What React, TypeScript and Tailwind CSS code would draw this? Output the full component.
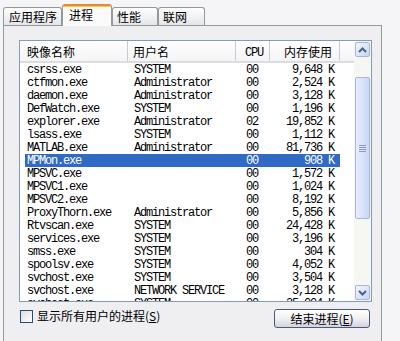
import React from "react";

const rows: [string, string, string, string][] = [
  ["csrss.exe", "SYSTEM", "00", "9,648 K"],
  ["ctfmon.exe", "Administrator", "00", "2,524 K"],
  ["daemon.exe", "Administrator", "00", "3,128 K"],
  ["DefWatch.exe", "SYSTEM", "00", "1,196 K"],
  ["explorer.exe", "Administrator", "02", "19,852 K"],
  ["lsass.exe", "SYSTEM", "00", "1,112 K"],
  ["MATLAB.exe", "Administrator", "00", "81,736 K"],
  ["MPMon.exe", "", "00", "908 K"],
  ["MPSVC.exe", "", "00", "1,572 K"],
  ["MPSVC1.exe", "", "00", "1,024 K"],
  ["MPSVC2.exe", "", "00", "8,192 K"],
  ["ProxyThorn.exe", "Administrator", "00", "5,856 K"],
  ["Rtvscan.exe", "SYSTEM", "00", "24,428 K"],
  ["services.exe", "SYSTEM", "00", "3,196 K"],
  ["smss.exe", "SYSTEM", "00", "304 K"],
  ["spoolsv.exe", "SYSTEM", "00", "4,052 K"],
  ["svchost.exe", "SYSTEM", "00", "3,504 K"],
  ["svchost.exe", "NETWORK SERVICE", "00", "3,128 K"],
  ["svchost.exe", "SYSTEM", "00", "25,004 K"],
];

const cjk = "font-['Noto_Sans_CJK_SC',sans-serif]";
const mono = "font-['Liberation_Mono','Noto_Sans_CJK_SC',monospace] tracking-[-1.2px]";

function Arrow({ up }: { up: boolean }) {
  return (
    <svg width="9" height="6" viewBox="0 0 9 6">
      <path
        d={up ? "M1 5 L4.5 1.5 L8 5" : "M1 1 L4.5 4.5 L8 1"}
        fill="none"
        stroke="#4d6185"
        strokeWidth="2"
      />
    </svg>
  );
}

function ScrollButton({ up }: { up: boolean }) {
  return (
    <div className="h-[17px] w-[17px] p-px">
      <div className="h-full w-full rounded-[2px] border border-[#a9b6d6] bg-linear-to-br from-[#f3f6fd] to-[#c8d5f5] flex items-center justify-center">
        <Arrow up={up} />
      </div>
    </div>
  );
}

export default function App() {
  return (
    <div className={`w-[400px] h-[341px] overflow-hidden bg-[#f5f4f6] text-black text-[12px] ${cjk}`}>
      {/* Tabs */}
      <div className="flex items-end h-[25px] pl-[3px]">
        <div className="w-[59px] h-[18px] border border-b-0 border-[#919b9c] rounded-t-[3px] bg-linear-to-b from-[#ffffff] to-[#e6e5ea] pl-[5px] leading-[17px]">
          应用程序
        </div>
        <div className="relative z-10 -mb-px w-[50px] h-[22px] border border-b-0 border-[#919b9c] border-t-0 rounded-t-[3px] bg-[#fbfbfc] overflow-hidden">
          <div className="h-[2px] bg-[#e68b2c]" />
          <div className="h-px bg-[#ffc73c]" />
          <div className="pl-[6px] leading-[16px]">进程</div>
        </div>
        <div className="w-[46px] h-[18px] border border-b-0 border-[#919b9c] rounded-t-[3px] bg-linear-to-b from-[#ffffff] to-[#e6e5ea] pl-[4px] leading-[17px]">
          性能
        </div>
        <div className="w-[47px] h-[18px] border border-b-0 border-[#919b9c] rounded-t-[3px] bg-linear-to-b from-[#ffffff] to-[#e6e5ea] pl-[4px] leading-[17px]">
          联网
        </div>
      </div>

      {/* Panel */}
      <div className="ml-[3px] w-[379px] h-[330px] border border-[#919b9c] bg-[#efeef1]">
        {/* List box */}
        <div className="ml-[15px] mt-[14px] w-[353px] h-[262px] border border-[#7f9db9] bg-white flex">
          <div className="w-[334px] flex flex-col">
            {/* Header */}
            <div className="h-[22px] flex bg-linear-to-b from-[#ffffff] to-[#f4f4f4] border-b-2 border-[#dcdce2]">
              <div className="w-[108px] pl-[7px] h-full pt-[3px] leading-[16px] border-r border-[#c9c9cf]">映像名称</div>
              <div className="w-[108px] pl-[5px] h-full pt-[3px] leading-[16px] border-r border-[#c9c9cf]">用户名</div>
              <div className={`w-[34px] pl-[9px] h-full pt-[4px] leading-[16px] border-r border-[#c9c9cf] ${mono}`}>CPU</div>
              <div className="w-[70px] pr-[7px] h-full pt-[3px] leading-[16px] text-right border-r border-[#c9c9cf]">内存使用</div>
            </div>
            {/* Rows */}
            <div className={`flex-1 overflow-hidden ${mono}`}>
              {rows.map((r, i) => {
                const sel = i === 7;
                return (
                  <div key={i} className="h-[13px] pl-[5px] flex">
                    <div
                      className={`w-[315px] h-[13px] flex leading-[15px] whitespace-pre ${
                        sel ? "bg-[#316ac5] text-white" : ""
                      }`}
                    >
                      <div className="w-[103px] pl-[2px] h-[13px]">{r[0]}</div>
                      <div className="w-[108px] pl-[6px] h-[13px]">{r[1]}</div>
                      <div className="w-[34px] pl-[10px] h-[13px]">{r[2]}</div>
                      <div className="w-[70px] pr-[6px] h-[13px] text-right">{r[3]}</div>
                    </div>
                  </div>
                );
              })}
            </div>
          </div>
          {/* Scrollbar */}
          <div className="w-[17px] flex flex-col bg-[#f6f6f3]">
            <ScrollButton up />
            <div className="flex-1 flex flex-col">
              <div className="h-[19px]" />
              <div className="h-[142px] px-px">
                <div className="h-full w-full rounded-[2px] border border-[#a9b6d6] bg-linear-to-r from-[#e8eefd] to-[#c9d6f7] flex flex-col items-center justify-center gap-px">
                  <div className="w-[7px] h-px bg-[#8d9bbd]" />
                  <div className="w-[7px] h-px bg-[#8d9bbd]" />
                  <div className="w-[7px] h-px bg-[#8d9bbd]" />
                  <div className="w-[7px] h-px bg-[#8d9bbd]" />
                </div>
              </div>
              <div className="flex-1" />
            </div>
            <ScrollButton up={false} />
          </div>
        </div>

        {/* Bottom row */}
        <div className="ml-[16px] mt-[7px] w-[350px] flex justify-between items-start">
          <div className="flex items-center h-[14px]">
            <div className="w-[13px] h-[13px] border border-[#1c5180] bg-linear-to-br from-[#dcdcd7] to-[#ffffff]" />
            <span className="ml-[4px] leading-[14px]">
              显示所有用户的进程(<span className="underline">S</span>)
            </span>
          </div>
          <div className="w-[96px] h-[19px] rounded-[3px] border border-[#4d5a77] bg-linear-to-b from-[#ffffff] via-[#f0f0f4] to-[#d4d4de] flex items-center justify-center leading-[17px]">
            结束进程(<span className="underline">E</span>)
          </div>
        </div>
      </div>
    </div>
  );
}
